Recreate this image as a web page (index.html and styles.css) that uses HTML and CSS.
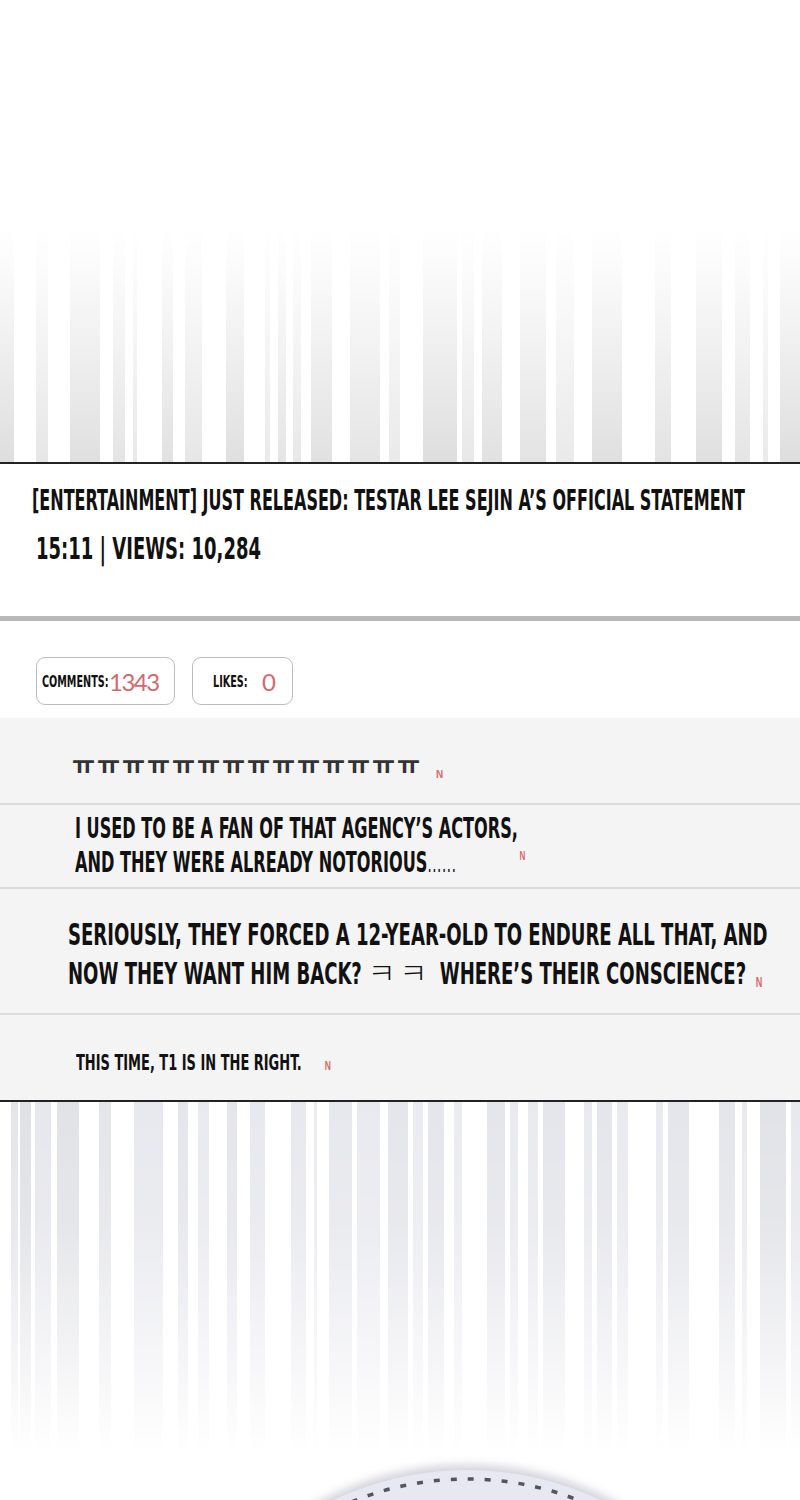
FILE: index.html
```html
<!DOCTYPE html>
<html>
<head>
    <title>Statement - Comments</title>
    <link rel="stylesheet" href="styles.css">
</head>
<body>
<div class="page">

    <div class="stripes stripes-top"></div>

    <div class="article">
        <div class="article-title cond">[ENTERTAINMENT] JUST RELEASED: TESTAR LEE SEJIN A’S OFFICIAL STATEMENT</div>
        <div class="article-meta cond">15:11 | VIEWS: 10,284</div>
    </div>

    <div class="stats">
        <div class="chip chip-comments">
            <span class="chip-label cond">COMMENTS:</span>
            <span class="chip-count">1343</span>
        </div>
        <div class="chip chip-likes">
            <span class="chip-label cond">LIKES:</span>
            <span class="chip-count">0</span>
        </div>
    </div>

    <ul class="comments">
        <li class="comment comment-cry">
            <div class="comment-text"><span class="cry">ㅠㅠㅠㅠㅠㅠㅠㅠㅠㅠㅠㅠㅠㅠ</span><span class="new">N</span></div>
        </li>
        <li class="comment comment-fan">
            <div class="comment-text cond">I USED TO BE A FAN OF THAT AGENCY’S ACTORS,<br>AND THEY WERE ALREADY NOTORIOUS<span class="dots">......</span><span class="new">N</span></div>
        </li>
        <li class="comment comment-long">
            <div class="comment-text cond">SERIOUSLY, THEY FORCED A 12-YEAR-OLD TO ENDURE ALL THAT, AND<br>NOW THEY WANT HIM BACK? <span class="kk">ㅋㅋ</span> WHERE’S THEIR CONSCIENCE?<span class="new">N</span></div>
        </li>
        <li class="comment comment-short">
            <div class="comment-text cond">THIS TIME, T1 IS IN THE RIGHT.<span class="new">N</span></div>
        </li>
    </ul>

    <div class="stripes stripes-bottom">
        <div class="badge">
            <svg viewBox="0 0 624 624" width="624" height="624">
                <circle cx="312" cy="312" r="303" fill="none" stroke="#55555f" stroke-width="3.5" stroke-dasharray="6 11"/>
            </svg>
        </div>
    </div>

</div>
</body>
</html>
```

FILE: styles.css
```css
body {
    margin: 0;
    background-color: #FFFFFF;
    color: #111111;
    font-family: "DejaVu Sans Condensed", "Liberation Sans", sans-serif;
}

.page {
    width: 800px;
    height: 1500px;
    overflow: hidden;
}

/* condensed headline lettering */
.cond {
    font-weight: bold;
    white-space: nowrap;
    transform-origin: left top;
}

/* barcode-like background bands */
.stripes {
    position: relative;
}
.stripes-top {
    height: 462px;
    border-bottom: 2px solid #222222;
    background:
        linear-gradient(to bottom, #FFFFFF 0, #FFFFFF 228px, rgba(255,255,255,0.88) 270px, rgba(255,255,255,0.55) 360px, rgba(255,255,255,0.15) 462px),
        linear-gradient(to right,
            #d8d8d8 0 14px, transparent 14px 36px, #e2e2e2 36px 48px, transparent 48px 70px,
            #dadada 70px 100px, transparent 100px 113px, #e0e0e0 113px 125px, transparent 125px 133px,
            #e4e4e4 133px 137px, transparent 137px 162px, #dcdcdc 162px 173px, transparent 173px 185px,
            #e2e2e2 185px 202px, transparent 202px 226px, #dadada 226px 244px, transparent 244px 265px,
            #e6e6e6 265px 270px, transparent 270px 278px, #e0e0e0 278px 286px, transparent 286px 293px,
            #e4e4e4 293px 301px, transparent 301px 311px, #dcdcdc 311px 332px, transparent 332px 350px,
            #e0e0e0 350px 380px, transparent 380px 389px, #e6e6e6 389px 400px, transparent 400px 423px,
            #d8d8d8 423px 457px, transparent 457px 462px, #e4e4e4 462px 474px, transparent 474px 482px,
            #dcdcdc 482px 502px, transparent 502px 520px, #dedede 520px 546px, transparent 546px 556px,
            #e6e6e6 556px 574px, transparent 574px 592px, #dadada 592px 622px, transparent 622px 655px,
            #dedede 655px 671px, transparent 671px 696px, #dadada 696px 722px, transparent 722px 735px,
            #e0e0e0 735px 750px, transparent 750px 763px, #e6e6e6 763px 768px, transparent 768px 780px,
            #d8d8d8 780px 800px),
        #FFFFFF;
}
.stripes-bottom {
    height: 397px;
    border-top: 2px solid #222222;
    background:
        linear-gradient(to bottom, rgba(255,255,255,0.25) 0, rgba(255,255,255,0.35) 120px, rgba(255,255,255,0.72) 260px, #FFFFFF 350px),
        linear-gradient(to right,
            transparent 0 11px, #dcdde2 11px 18px, transparent 18px 20px, #d6d7dc 20px 31px,
            transparent 31px 35px, #dedfe6 35px 51px, transparent 51px 57px, #d8d9de 57px 79px,
            transparent 79px 99px, #dcdde2 99px 111px, transparent 111px 134px, #e0e1e8 134px 163px,
            transparent 163px 178px, #dcdde4 178px 188px, transparent 188px 198px, #e2e3ea 198px 209px,
            transparent 209px 227px, #dcdde4 227px 237px, transparent 237px 250px, #e0e1e8 250px 265px,
            transparent 265px 291px, #e0e1e8 291px 306px, transparent 306px 314px, #e4e5ec 314px 317px,
            transparent 317px 329px, #dfe0e7 329px 352px, transparent 352px 357px, #e2e3ea 357px 380px,
            transparent 380px 388px, #dcdde4 388px 408px, transparent 408px 413px, #e4e5ec 413px 423px,
            transparent 423px 428px, #dcdde4 428px 444px, transparent 444px 454px, #e4e5ec 454px 462px,
            transparent 462px 487px, #dcdde4 487px 505px, transparent 505px 510px, #e2e3ea 510px 518px,
            transparent 518px 528px, #e2e3ea 528px 538px, transparent 538px 543px, #dcdde4 543px 565px,
            transparent 565px 584px, #e2e3ea 584px 592px, transparent 592px 597px, #dcdde4 597px 612px,
            transparent 612px 617px, #e2e3ea 617px 628px, transparent 628px 656px, #e2e3ea 656px 663px,
            transparent 663px 668px, #dcdde4 668px 689px, transparent 689px 719px, #dcdde4 719px 735px,
            transparent 735px 742px, #e2e3ea 742px 747px, transparent 747px 760px, #d8d9e0 760px 786px,
            transparent 786px 791px, #e0e1e8 791px 800px),
        #FFFFFF;
}

/* round medallion peeking up from the bottom edge */
.badge {
    position: absolute;
    left: 155px;
    top: 368px;
    width: 624px;
    height: 624px;
    border-radius: 50%;
    background-color: #e8e8f2;
    box-shadow: 0 -2px 10px 3px rgba(140, 140, 160, 0.4);
}
.badge svg {
    display: block;
}

/* article header */
.article {
    height: 157px;
    box-sizing: border-box;
    padding: 20px 0 0 32px;
    border-bottom: 5px solid #b8b8b8;
}
.article-title {
    font-size: 28px;
    line-height: 34px;
    transform: scaleX(0.636);
}
.article-meta {
    margin: 12px 0 0 4px;
    font-size: 31px;
    line-height: 37px;
    transform: scaleX(0.645);
}

/* comment / like counters */
.stats {
    height: 97px;
    box-sizing: border-box;
    padding: 36px 0 0 36px;
    display: flex;
    gap: 17px;
    align-items: flex-start;
}
.chip {
    height: 48px;
    box-sizing: border-box;
    border: 1.5px solid #bdbdbd;
    border-radius: 9px;
    display: flex;
    align-items: center;
    background-color: #FFFFFF;
}
.chip-comments {
    width: 139px;
    padding-left: 5px;
}
.chip-likes {
    width: 101px;
    padding-left: 20px;
}
.chip-label {
    font-size: 16px;
    transform: scaleX(0.67);
    transform-origin: left center;
}
.chip-comments .chip-label { width: 67px; }
.chip-likes .chip-label { width: 36px; margin-right: 13px; }
.chip-count {
    font-family: "Lato", "Liberation Sans", sans-serif;
    font-size: 24px;
    color: #d4686d;
    letter-spacing: -1.5px;
}

/* comment list */
.comments {
    list-style: none;
    margin: 0;
    padding: 0;
    background-color: #f4f4f4;
}
.comment {
    box-sizing: border-box;
    border-bottom: 2px solid #dcdcdc;
}
.comment:last-child {
    border-bottom: none;
}
.comment-cry {
    height: 87px;
    padding: 33px 0 0 72px;
}
.comment-fan {
    height: 84px;
    padding: 6px 0 0 75px;
}
.comment-fan .comment-text {
    font-size: 29px;
    line-height: 34px;
    transform: scaleX(0.618);
}
.comment-long {
    height: 126px;
    padding: 26px 0 0 68px;
}
.comment-long .comment-text {
    font-size: 31px;
    line-height: 38px;
    transform: scaleX(0.647);
}
.comment-short {
    height: 85px;
    padding: 34px 0 0 76px;
}
.comment-short .comment-text {
    font-size: 22px;
    line-height: 28px;
    transform: scaleX(0.656);
}

.cry {
    font-family: "Noto Sans CJK KR", sans-serif;
    font-weight: bold;
    font-size: 25px;
    line-height: 25px;
    letter-spacing: 2px;
    color: #333333;
}
/* wide, light jamo laughter */
.kk {
    display: inline-block;
    width: 102px;
    margin-left: -1px;
    font-family: "Noto Sans CJK KR", sans-serif;
    font-weight: 300;
    font-size: 28px;
    letter-spacing: 3px;
    transform: scaleX(1.7);
    transform-origin: left center;
}
.dots {
    font-weight: normal;
    font-size: 24px;
    letter-spacing: 1px;
}

/* "new" marker after each comment */
.new {
    display: inline-block;
    font-family: "Liberation Sans", sans-serif;
    font-size: 12px;
    line-height: 0;
    font-weight: bold;
    color: #d46a6a;
}
.comment-cry .new { margin-left: 14px; font-size: 10px; vertical-align: -4px; }
.comment-fan .new { margin-left: 102px; vertical-align: 12px; font-size: 13px; }
.comment-long .new { margin-left: 15px; vertical-align: -3px; font-size: 14px; }
.comment-short .new { margin-left: 35px; font-size: 13px; }
```
